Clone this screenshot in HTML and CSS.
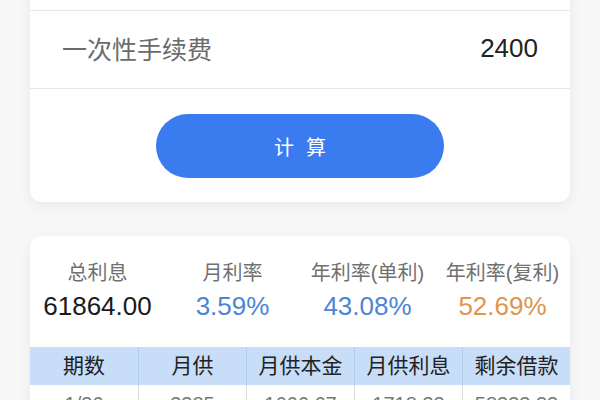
FILE: index.html
```html
<!DOCTYPE html>
<html lang="zh-CN">
<head>
<meta charset="utf-8">
<link rel="stylesheet" href="styles.css">
</head>
<body>
<div class="page">
  <div class="card form-card">
    <div class="row"></div>
    <div class="row"><span class="label">一次性手续费</span><span class="value">2400</span></div>
    <div class="btn-wrap"><button class="btn">计算</button></div>
  </div>
  <div class="card result-card">
    <div class="stats">
      <div class="stat"><div class="stat-label">总利息</div><div class="stat-value">61864.00</div></div>
      <div class="stat"><div class="stat-label">月利率</div><div class="stat-value blue">3.59%</div></div>
      <div class="stat"><div class="stat-label">年利率(单利)</div><div class="stat-value blue">43.08%</div></div>
      <div class="stat"><div class="stat-label">年利率(复利)</div><div class="stat-value orange">52.69%</div></div>
    </div>
    <div class="table">
      <div class="tr th"><div>期数</div><div>月供</div><div>月供本金</div><div>月供利息</div><div>剩余借款</div></div>
      <div class="tr td"><div>1/36</div><div>3385</div><div>1666.67</div><div>1718.33</div><div>58333.33</div></div>
    </div>
  </div>
</div>
</body>
</html>
```
FILE: styles.css
```css
html, body { margin: 0; padding: 0; }
body {
  background: #f7f7f7;
  font-family: "Liberation Sans", "Noto Sans CJK SC", sans-serif;
  width: 600px;
  height: 400px;
  overflow: hidden;
}
.page {
  padding: 0 30px;
  display: flex;
  flex-direction: column;
  gap: 34px;
}
.card {
  background: #fff;
  border-radius: 12px;
  box-shadow: 0 4px 14px rgba(0,0,0,0.06);
}
.form-card {
  margin-top: -67px;
}
.row {
  height: 74px;
  border-bottom: 1px solid #e6e6e6;
  display: flex;
  align-items: center;
  justify-content: space-between;
  padding: 0 32px 3px;
  box-sizing: content-box;
}
.label { font-size: 25px; color: #6b6b6b; }
.value { font-size: 26px; color: #222; }
.btn-wrap {
  display: flex;
  justify-content: center;
  padding: 25px 0 24px;
}
.btn {
  width: 288px;
  height: 64px;
  border: none;
  border-radius: 32px;
  background: #3a7cf0;
  color: #fff;
  font-family: "Noto Sans CJK SC", sans-serif;
  font-size: 20px;
  letter-spacing: 12px;
  text-indent: 12px;
}
.result-card {
  padding-top: 23px;
  border-radius: 12px 12px 0 0;
}
.stats {
  display: grid;
  grid-template-columns: repeat(4, 1fr);
}
.stat { text-align: center; }
.stat-label { font-size: 20px; line-height: 28px; color: #707070; }
.stat-value { font-size: 26px; line-height: 34px; margin-top: 2px; color: #1a1a1a; }
.stat-value.blue { color: #4d85d4; }
.stat-value.orange { color: #e0944c; }
.table { margin-top: 24px; }
.tr {
  display: grid;
  grid-template-columns: repeat(5, 1fr);
}
.tr > div {
  text-align: center;
  border-left: 1px solid #dcdcdc;
}
.tr > div:first-child { border-left: none; }
.th { background: #c7ddf8; height: 38px; }
.th > div {
  line-height: 38px;
  font-size: 21px;
  color: #222;
  border-left-color: #b4cdef;
}
.td > div {
  height: 40px;
  line-height: 24px;
  font-size: 20px;
  color: #777;
  padding-top: 7px;
}
```
